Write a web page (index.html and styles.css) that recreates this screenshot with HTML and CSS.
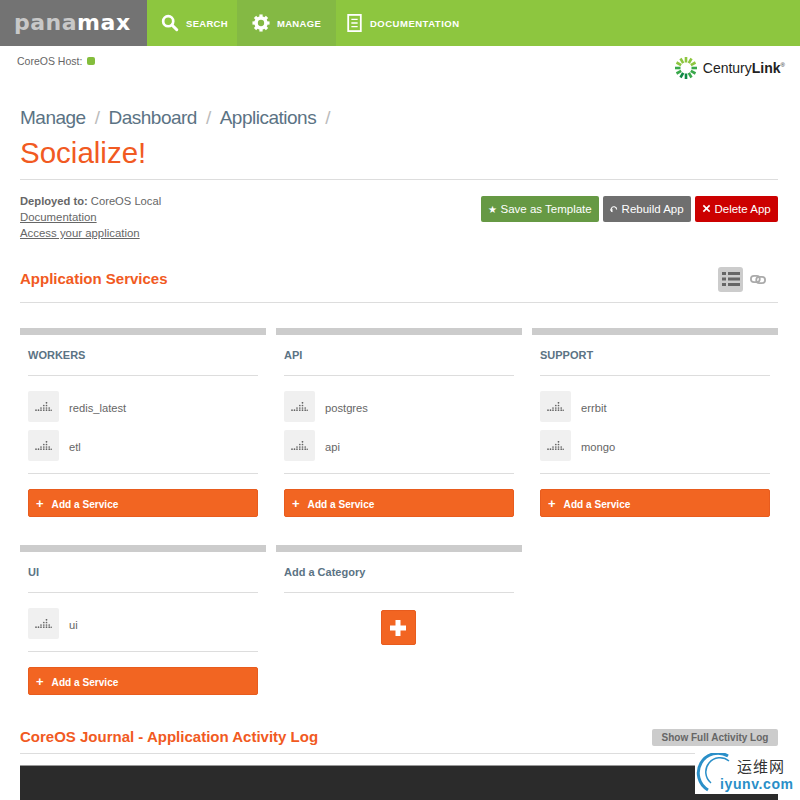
FILE: index.html
```html
<!DOCTYPE html>
<html>
<head>
    <meta charset="utf-8">
    <link rel="stylesheet" href="styles.css">
    <title>Panamax - Socialize!</title>
</head>
<body>
    <header class="topbar">
        <div class="logo"><span class="logo-light">pana</span><span class="logo-white">max</span></div>
        <nav class="nav">
            <a class="nav-item nav-search">
                <svg class="nav-icon" viewBox="0 0 20 20" width="18" height="18"><circle cx="8" cy="8" r="5.6" fill="none" stroke="#fff" stroke-width="3"/><path d="M12.2 12.2 L17.5 17.5" stroke="#fff" stroke-width="3.4" stroke-linecap="round"/></svg>
                SEARCH
            </a>
            <a class="nav-item nav-manage">
                <svg class="nav-icon" viewBox="0 0 20 20" width="18" height="18"><circle cx="10" cy="10" r="5.5" fill="none" stroke="#fff" stroke-width="4"/><g stroke="#fff" stroke-width="3.6"><path d="M10 0.5V4"/><path d="M10 16V19.5"/><path d="M0.5 10H4"/><path d="M16 10H19.5"/><path d="M3.3 3.3L5.8 5.8"/><path d="M14.2 14.2L16.7 16.7"/><path d="M3.3 16.7L5.8 14.2"/><path d="M14.2 5.8L16.7 3.3"/></g></svg>
                MANAGE
            </a>
            <a class="nav-item nav-docs">
                <svg class="nav-icon" viewBox="0 0 16 20" width="15" height="18"><rect x="1" y="1" width="14" height="18" fill="none" stroke="#fff" stroke-width="2"/><path d="M4.5 6H11.5M4.5 10H11.5M4.5 14H11.5" stroke="#fff" stroke-width="1.6"/></svg>
                DOCUMENTATION
            </a>
        </nav>
    </header>

    <main class="page">
        <div class="host-row">
            <div class="host">CoreOS Host: <span class="host-dot"></span></div>
            <div class="brand">
                <svg viewBox="0 0 24 24" width="24" height="24">
                    <g stroke-width="2.6">
                        <path d="M12 1V6.5" stroke="#8dc63f"/>
                        <path d="M17.5 2.5L14.8 7.2" stroke="#8dc63f"/>
                        <path d="M21.5 6.5L16.8 9.2" stroke="#8dc63f"/>
                        <path d="M23 12H17.5" stroke="#39a84a"/>
                        <path d="M21.5 17.5L16.8 14.8" stroke="#39a84a"/>
                        <path d="M17.5 21.5L14.8 16.8" stroke="#39a84a"/>
                        <path d="M12 23V17.5" stroke="#0f8a45"/>
                        <path d="M6.5 21.5L9.2 16.8" stroke="#0f8a45"/>
                        <path d="M2.5 17.5L7.2 14.8" stroke="#39a84a"/>
                        <path d="M1 12H6.5" stroke="#39a84a"/>
                        <path d="M2.5 6.5L7.2 9.2" stroke="#8dc63f"/>
                        <path d="M6.5 2.5L9.2 7.2" stroke="#8dc63f"/>
                    </g>
                </svg>
                <span class="brand-name">Century<b>Link</b><sup class="brand-mark">®</sup></span>
            </div>
        </div>

        <div class="title-block">
            <div class="crumbs">
                <a>Manage</a><span class="slash">/</span><a>Dashboard</a><span class="slash">/</span><a>Applications</a><span class="slash">/</span>
            </div>
            <h1 class="app-name">Socialize!</h1>
        </div>

        <section class="app-info">
            <div class="info-text">
                <div class="deployed"><b>Deployed to:</b> CoreOS Local</div>
                <div><a class="info-link">Documentation</a></div>
                <div><a class="info-link">Access your application</a></div>
            </div>
            <div class="actions">
                <button class="btn btn-green"><span class="btn-glyph">★</span> Save as Template</button>
                <button class="btn btn-gray">
                    <svg viewBox="0 0 10 10" width="8" height="8"><path d="M2 7.6A3.4 3.4 0 1 1 7.8 6.8" fill="none" stroke="#fff" stroke-width="1.4" transform="rotate(-20 5 5)"/><path d="M0 5.5L3.8 5.5L1.8 8.8Z" fill="#fff"/></svg>
                    Rebuild App
                </button>
                <button class="btn btn-red">
                    <svg viewBox="0 0 10 10" width="9" height="9"><path d="M1.5 1.5L8.5 8.5M8.5 1.5L1.5 8.5" stroke="#fff" stroke-width="1.8"/></svg>
                    Delete App
                </button>
            </div>
        </section>

        <section class="section-head services-head">
            <h2 class="section-title">Application Services</h2>
            <div class="view-toggle">
                <span class="view-btn">
                    <svg viewBox="0 0 18 14" width="18" height="14"><g fill="#666"><rect x="0" y="0" width="4" height="3"/><rect x="6" y="0" width="12" height="3"/><rect x="0" y="5.5" width="4" height="3"/><rect x="6" y="5.5" width="12" height="3"/><rect x="0" y="11" width="4" height="3"/><rect x="6" y="11" width="12" height="3"/></g></svg>
                </span>
                <svg class="chain" viewBox="0 0 18 12" width="16" height="11"><g fill="none" stroke="#aaa" stroke-width="2"><rect x="1" y="2" width="10" height="7" rx="3.5"/><rect x="7" y="3" width="10" height="7" rx="3.5"/></g></svg>
            </div>
        </section>

        <section class="categories">
            <div class="category">
                <h3 class="cat-title">WORKERS</h3>
                <div class="service-list">
                    <div class="service"><span class="tile"><svg viewBox="0 0 17 9" width="17" height="9"><use href="#dots"/></svg></span><span class="service-name">redis_latest</span></div>
                    <div class="service"><span class="tile"><svg viewBox="0 0 17 9" width="17" height="9"><use href="#dots"/></svg></span><span class="service-name">etl</span></div>
                </div>
                <button class="add-service"><span class="add-plus">+</span>Add a Service</button>
            </div>
            <div class="category">
                <h3 class="cat-title">API</h3>
                <div class="service-list">
                    <div class="service"><span class="tile"><svg viewBox="0 0 17 9" width="17" height="9"><use href="#dots"/></svg></span><span class="service-name">postgres</span></div>
                    <div class="service"><span class="tile"><svg viewBox="0 0 17 9" width="17" height="9"><use href="#dots"/></svg></span><span class="service-name">api</span></div>
                </div>
                <button class="add-service"><span class="add-plus">+</span>Add a Service</button>
            </div>
            <div class="category">
                <h3 class="cat-title">SUPPORT</h3>
                <div class="service-list">
                    <div class="service"><span class="tile"><svg viewBox="0 0 17 9" width="17" height="9"><use href="#dots"/></svg></span><span class="service-name">errbit</span></div>
                    <div class="service"><span class="tile"><svg viewBox="0 0 17 9" width="17" height="9"><use href="#dots"/></svg></span><span class="service-name">mongo</span></div>
                </div>
                <button class="add-service"><span class="add-plus">+</span>Add a Service</button>
            </div>
            <div class="category">
                <h3 class="cat-title">UI</h3>
                <div class="service-list">
                    <div class="service"><span class="tile"><svg viewBox="0 0 17 9" width="17" height="9"><use href="#dots"/></svg></span><span class="service-name">ui</span></div>
                </div>
                <button class="add-service"><span class="add-plus">+</span>Add a Service</button>
            </div>
            <div class="category">
                <h3 class="cat-title">Add a Category</h3>
                <div class="add-category">
                    <button class="add-big">
                        <svg viewBox="0 0 16 16" width="16" height="16"><path d="M8 0V16M0 8H16" stroke="#fff" stroke-width="5"/></svg>
                    </button>
                </div>
            </div>
        </section>

        <section class="section-head journal-head">
            <h2 class="section-title">CoreOS Journal - Application Activity Log</h2>
            <button class="show-log">Show Full Activity Log</button>
        </section>
        <div class="terminal"></div>
    </main>

    <div class="watermark">
        <svg class="wm-arcs" viewBox="0 0 40 40" width="40" height="40"><g fill="none" stroke="#2a8fc8"><path d="M12 37A18 18 0 0 1 32 3" stroke-width="3"/><path d="M15 30A13 13 0 0 1 33 8" stroke-width="1.5"/></g></svg>
        <div class="wm-cn">运维网</div>
        <div class="wm-url">iyunv.com</div>
    </div>

    <svg class="defs" width="0" height="0">
        <defs>
            <g id="dots" fill="#666">
                <circle cx="11.5" cy="0.8" r="0.85"/>
                <circle cx="8.8" cy="3.5" r="0.85"/><circle cx="11.5" cy="3.5" r="0.85"/>
                <circle cx="6" cy="6" r="0.85"/><circle cx="8.8" cy="6" r="0.85"/><circle cx="11.5" cy="6" r="0.85"/><circle cx="14.2" cy="6" r="0.85"/>
                <circle cx="1" cy="8.2" r="0.85"/><circle cx="3.5" cy="8.2" r="0.85"/><circle cx="6" cy="8.2" r="0.85"/><circle cx="8.8" cy="8.2" r="0.85"/><circle cx="11.5" cy="8.2" r="0.85"/><circle cx="14.2" cy="8.2" r="0.85"/><circle cx="16.2" cy="8.2" r="0.8"/>
            </g>
        </defs>
    </svg>
</body>
</html>
```

FILE: styles.css
```css
* {
    box-sizing: border-box;
}
html, body {
    margin: 0;
    height: 800px;
    overflow: hidden;
}
body {
    position: relative;
    background-color: #fff;
    color: #666;
    font-family: "Liberation Sans", Arial, sans-serif;
}
h1, h2, h3 {
    margin: 0;
}

/* top bar */
.topbar {
    display: flex;
    height: 46px;
    background-color: #8dc63f;
}
.logo {
    width: 147px;
    background-color: #737373;
    padding-left: 14px;
    font-family: "DejaVu Sans", sans-serif;
    font-weight: bold;
    font-size: 22px;
    line-height: 45px;
    letter-spacing: 0.5px;
}
.logo-light {
    color: #c8c8c8;
}
.logo-white {
    color: #fff;
}
.nav {
    display: flex;
}
.nav-item {
    display: flex;
    align-items: center;
    color: #fff;
    font-size: 9.5px;
    font-weight: bold;
    letter-spacing: 0.3px;
}
.nav-search {
    width: 90px;
    padding-left: 14px;
}
.nav-manage {
    width: 99px;
    padding-left: 15px;
    background-color: #84b944;
}
.nav-docs {
    padding-left: 11px;
    letter-spacing: 0.5px;
}
.nav-icon {
    margin-right: 7px;
}
.nav-docs .nav-icon {
    margin-right: 8px;
}

/* page */
.page {
    padding: 0 22px 0 20px;
}
.host-row {
    display: flex;
    justify-content: space-between;
    height: 54px;
}
.host {
    margin: 10px 0 0 -3px;
    font-size: 10.5px;
    line-height: 11px;
    color: #666;
}
.host-dot {
    display: inline-block;
    width: 8px;
    height: 8px;
    margin-left: 2px;
    border-radius: 2px;
    background-color: #84bd3c;
}
.brand {
    display: flex;
    align-items: center;
    height: 24px;
    margin: 10px -7px 0 0;
}
.brand-name {
    margin-left: 5px;
    font-size: 14px;
    color: #222;
}
.brand-mark {
    font-size: 6px;
}

.title-block {
    height: 80px;
    border-bottom: 1px solid #ddd;
}
.crumbs {
    height: 35px;
    font-size: 19px;
    line-height: 35px;
    color: #5b7384;
    letter-spacing: -0.5px;
}
.slash {
    margin: 0 9px;
    color: #bbb;
}
.app-name {
    font-size: 29.5px;
    font-weight: normal;
    line-height: 36px;
    color: #f15a22;
}

.app-info {
    display: flex;
    justify-content: space-between;
    height: 67px;
}
.info-text {
    padding-top: 13px;
    font-size: 11.4px;
    line-height: 16px;
}
.deployed {
    font-size: 11.2px;
}
.info-link {
    text-decoration: underline;
}
.actions {
    display: flex;
    gap: 4px;
    padding-top: 16px;
}
.btn {
    height: 26px;
    padding: 0 4px;
    border: none;
    border-radius: 2px;
    color: #fff;
    font-family: inherit;
    font-size: 11.5px;
    white-space: nowrap;
}
.btn-green {
    width: 118px;
    background-color: #669944;
}
.btn-gray {
    width: 88px;
    background-color: #6f6f6f;
}
.btn-red {
    width: 83px;
    background-color: #cc0000;
}
.btn-glyph {
    font-size: 10px;
}

.section-head {
    display: flex;
    justify-content: space-between;
    border-bottom: 1px solid #ddd;
}
.section-title {
    font-size: 15px;
    line-height: 18px;
    color: #f15a22;
}
.services-head {
    align-items: center;
    height: 56px;
    padding-top: 9px;
}
.view-toggle {
    display: flex;
    align-items: center;
    gap: 7px;
    margin-right: 12px;
}
.view-btn {
    display: flex;
    align-items: center;
    justify-content: center;
    width: 25px;
    height: 25px;
    border-radius: 3px;
    background-color: #ccc;
}

/* categories */
.categories {
    display: grid;
    grid-template-columns: repeat(3, 246px);
    column-gap: 10px;
    row-gap: 28px;
    margin-top: 25px;
}
.category {
    border-top: 7px solid #ccc;
    padding: 0 8px;
}
.cat-title {
    height: 41px;
    border-bottom: 1px solid #ddd;
    font-size: 11px;
    line-height: 40px;
    color: #5b7384;
}
.service-list {
    display: flex;
    flex-direction: column;
    gap: 8px;
    padding: 15px 0 12px;
    border-bottom: 1px solid #ddd;
}
.service {
    display: flex;
    align-items: center;
    height: 31px;
    font-size: 11.2px;
    color: #666;
}
.service-name {
    padding-top: 3px;
}
.tile {
    display: flex;
    align-items: center;
    justify-content: center;
    width: 31px;
    height: 31px;
    margin-right: 10px;
    border-radius: 2px;
    background-color: #f0f0f0;
}
.add-service {
    display: block;
    width: 100%;
    height: 28px;
    margin-top: 15px;
    padding: 0 0 0 7px;
    border: 1px solid #e85c1e;
    border-radius: 2px;
    background-color: #f26522;
    color: #fff;
    font-family: inherit;
    font-size: 10.1px;
    font-weight: bold;
    text-align: left;
}
.add-plus {
    margin-right: 8px;
    font-size: 13px;
}
.add-category {
    display: flex;
    justify-content: center;
    padding: 17px 2px 0 0;
}
.add-big {
    display: flex;
    align-items: center;
    justify-content: center;
    width: 35px;
    height: 35px;
    padding: 0;
    border: 1px solid #e85c1e;
    border-radius: 2px;
    background-color: #f26522;
}

/* journal */
.journal-head {
    align-items: flex-end;
    height: 41px;
    margin-top: 18px;
    padding-bottom: 7px;
}
.show-log {
    width: 126px;
    height: 17px;
    padding: 0;
    border: none;
    border-radius: 2px;
    background-color: #ccc;
    color: #666;
    font-family: inherit;
    font-size: 10px;
    font-weight: bold;
}
.terminal {
    height: 35px;
    margin-top: 11px;
    border-top: 1px solid #999;
    background-color: #2b2b2b;
}

/* watermark in the corner, over the page */
.watermark {
    position: absolute;
    right: 5px;
    bottom: 6px;
    width: 100px;
    height: 41px;
    background-color: #fff;
}
.wm-arcs {
    position: absolute;
    left: 1px;
    top: 0;
}
.wm-cn {
    position: absolute;
    left: 42px;
    top: 4px;
    font-family: "Noto Sans CJK SC", sans-serif;
    font-size: 15px;
    line-height: 18px;
    letter-spacing: 1px;
    color: #333;
}
.wm-url {
    position: absolute;
    left: 25px;
    top: 23px;
    font-size: 14px;
    line-height: 17px;
    font-weight: bold;
    letter-spacing: 0.6px;
    color: #2a8fc8;
}
.defs {
    position: absolute;
}
```
